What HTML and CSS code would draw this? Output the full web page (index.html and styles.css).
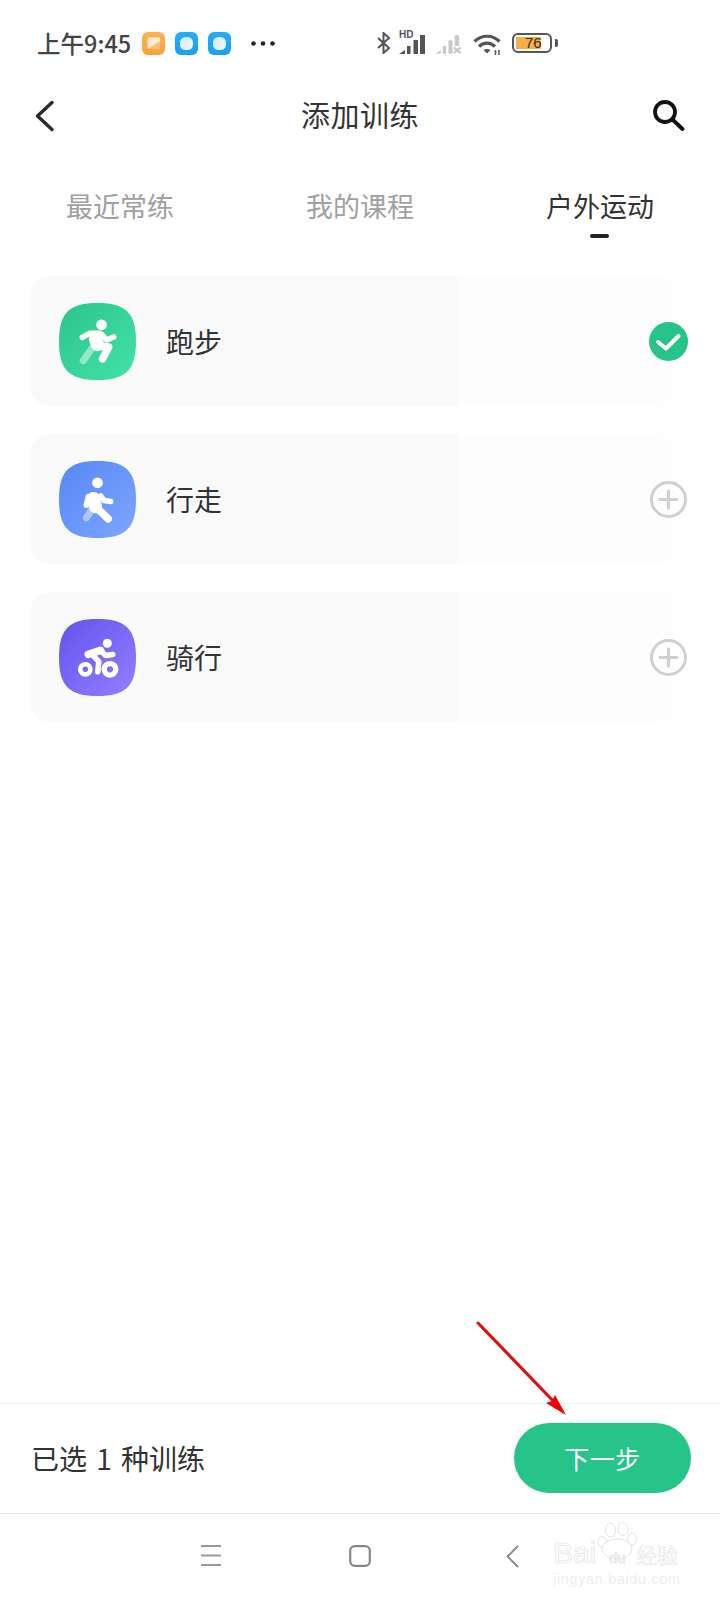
FILE: index.html
```html
<!DOCTYPE html>
<html lang="zh-CN">
<head>
<meta charset="utf-8">
<title>添加训练</title>
<link rel="stylesheet" href="styles.css">
</head>
<body>
<div class="app">
  <svg width="0" height="0" class="defs">
    <defs>
      <linearGradient id="gGreen" x1="0" y1="0" x2="1" y2="1"><stop offset="0" stop-color="#2cc38d"/><stop offset="1" stop-color="#43e3a9"/></linearGradient>
      <linearGradient id="gBlue" x1="0" y1="0" x2="1" y2="1"><stop offset="0" stop-color="#5587f5"/><stop offset="1" stop-color="#7fa6ff"/></linearGradient>
      <linearGradient id="gPurple" x1="0" y1="0" x2="1" y2="1"><stop offset="0" stop-color="#6253ec"/><stop offset="1" stop-color="#957fff"/></linearGradient>
      <linearGradient id="gOrange" x1="0" y1="0" x2="0" y2="1"><stop offset="0" stop-color="#fbb355"/><stop offset="1" stop-color="#f7a33a"/></linearGradient>
      <linearGradient id="gSky" x1="0" y1="0" x2="0" y2="1"><stop offset="0" stop-color="#25aef3"/><stop offset="1" stop-color="#1b9ff0"/></linearGradient>
      <linearGradient id="gDisc" x1="0" y1="0" x2="1" y2="1"><stop offset="0" stop-color="#cfe8fa"/><stop offset="1" stop-color="#f6f8f9"/></linearGradient>
    </defs>
  </svg>

  <header class="status">
    <div class="status-left">
      <span class="clock">上午9:45</span>
      <svg class="note" viewBox="0 0 23 23"><rect width="23" height="23" rx="6" fill="url(#gOrange)"/><rect x="5.500" y="5.500" width="12.500" height="11.500" rx="1.500" fill="#ffedd4"/><path d="M5.500 17L18 9v8z" fill="#fbc27a"/></svg>
      <svg class="note" viewBox="0 0 23 23"><rect width="23" height="23" rx="6" fill="url(#gSky)"/><rect x="5" y="5" width="13" height="13" rx="5.500" fill="url(#gDisc)"/></svg>
      <svg class="note" viewBox="0 0 23 23"><rect width="23" height="23" rx="6" fill="url(#gSky)"/><rect x="5" y="5" width="13" height="13" rx="5.500" fill="url(#gDisc)"/></svg>
      <svg class="dots" viewBox="0 0 24 5"><circle cx="2.500" cy="2.500" r="2.300" fill="#222"/><circle cx="12" cy="2.500" r="2.300" fill="#222"/><circle cx="21.500" cy="2.500" r="2.300" fill="#222"/></svg>
    </div>
    <div class="status-right">
      <svg class="ic-bt" viewBox="0 0 15 22"><path d="M2 6l11 10-5.500 5V1L13 6 2 16" fill="none" stroke="#555" stroke-width="2"/></svg>
      <div class="sig">
        <span class="hd">HD</span>
        <svg class="ic-sig" viewBox="0 0 27 19"><path d="M0 19l6-4v4zM8 11h3.500v8H8zM14.500 5H19v14h-4.500zM21 0h5v19h-5z" fill="#555"/></svg>
      </div>
      <svg class="ic-sig2" viewBox="0 0 27 19"><path d="M0 19l5-4v4zM7 11h3.500v8H7zM13 5h4v14h-4zM19.500 0H24v11h-4.500z" fill="#c8c8c8"/><path d="M18.500 12.500l7 6M25.500 12.500l-7 6" stroke="#c8c8c8" stroke-width="2.200"/></svg>
      <svg class="ic-wifi" viewBox="0 0 28 21"><path d="M1.500 7.500C8.500 .5 19.500 .5 26.500 7.500M6 12.500c4.500-4.500 11.500-4.500 16 0" fill="none" stroke="#555" stroke-width="3.200"/><path d="M10.500 16c2-1.500 5-1.500 7 0L14 19.500z" fill="#555"/><path d="M22.500 16v5M26 16v5" stroke="#555" stroke-width="1.500"/></svg>
      <div class="battery">
        <div class="cell"><span class="level"></span><span class="pct">76</span></div>
        <span class="tip"></span>
      </div>
    </div>
  </header>

  <nav class="titlebar">
    <svg class="ic-back" viewBox="0 0 20 32"><path d="M17 2.500L2.500 16 17 29.500" fill="none" stroke="#2b2b2b" stroke-width="3.400" stroke-linecap="round" stroke-linejoin="round"/></svg>
    <h1 class="title">添加训练</h1>
    <svg class="ic-search" viewBox="0 0 32 32"><circle cx="12" cy="12" r="10" fill="none" stroke="#111" stroke-width="3.800"/><path d="M20 20l9.500 9" stroke="#111" stroke-width="3.800" stroke-linecap="round"/></svg>
  </nav>

  <div class="tabs">
    <div class="tab">最近常练</div>
    <div class="tab">我的课程</div>
    <div class="tab active">户外运动</div>
  </div>

  <main class="list">
    <section class="card">
      <svg class="sport" viewBox="0 0 76 76">
        <path d="M38 0C66 0 76 10 76 38C76 66 66 76 38 76C10 76 0 66 0 38C0 10 10 0 38 0Z" fill="url(#gGreen)"/>
        <path d="M33 44L24 57" class="limb faded"/>
        <circle cx="42" cy="21.500" r="5.300" fill="#fff"/>
        <path d="M23 34L30 30H40" class="limb thin"/>
        <path d="M42 31L47 36.500L54 33.500" class="limb thin"/>
        <path d="M36 35.500L38 41" class="limb wide"/>
        <path d="M38 42.500L49 43.500L43 55" class="limb"/>
      </svg>
      <span class="name">跑步</span>
      <svg class="state" viewBox="0 0 39 39"><circle cx="19.500" cy="19.500" r="19.500" fill="#27c48a"/><path d="M9 20l8 6.500L29.500 14" fill="none" stroke="#fff" stroke-width="4" stroke-linecap="round" stroke-linejoin="round"/></svg>
    </section>

    <section class="card">
      <svg class="sport" viewBox="0 0 76 76">
        <path d="M38 0C66 0 76 10 76 38C76 66 66 76 38 76C10 76 0 66 0 38C0 10 10 0 38 0Z" fill="url(#gBlue)"/>
        <path d="M33 47L27 56" class="limb faded"/>
        <circle cx="38" cy="21.500" r="5.300" fill="#fff"/>
        <path d="M29 35L27 43.500" class="limb thin"/>
        <path d="M41 34.500L44.500 39L51 40" class="limb thin"/>
        <path d="M34 37L36 45" class="limb wide"/>
        <path d="M37 46L48.500 57" class="limb"/>
      </svg>
      <span class="name">行走</span>
      <svg class="state" viewBox="0 0 39 39"><circle cx="19.500" cy="19.500" r="17" fill="none" stroke="#d0d0d0" stroke-width="3"/><path d="M19.500 11v17M11 19.500h17" stroke="#d0d0d0" stroke-width="3" stroke-linecap="round"/></svg>
    </section>

    <section class="card">
      <svg class="sport" viewBox="0 0 76 76">
        <path d="M38 0C66 0 76 10 76 38C76 66 66 76 38 76C10 76 0 66 0 38C0 10 10 0 38 0Z" fill="url(#gPurple)"/>
        <circle cx="47.700" cy="24" r="4.500" fill="#fff"/>
        <circle cx="26" cy="49.700" r="5" fill="none" stroke="#fff" stroke-width="4.600"/>
        <circle cx="50.300" cy="49.700" r="5.700" fill="none" stroke="#fff" stroke-width="5.300"/>
        <path d="M29 35L41 31" class="limb"/>
        <path d="M41 31L46 36L53 35" class="limb thin"/>
        <path d="M32.700 35L39.300 42L38.300 52" class="limb thin"/>
      </svg>
      <span class="name">骑行</span>
      <svg class="state" viewBox="0 0 39 39"><circle cx="19.500" cy="19.500" r="17" fill="none" stroke="#d0d0d0" stroke-width="3"/><path d="M19.500 11v17M11 19.500h17" stroke="#d0d0d0" stroke-width="3" stroke-linecap="round"/></svg>
    </section>
  </main>

  <footer class="actionbar">
    <span class="summary">已选 1 种训练</span>
    <button class="next">下一步</button>
  </footer>

  <div class="navbar">
    <svg class="nav-menu" viewBox="0 0 20 21"><path d="M0 1h20M0 10.500h20M0 20h20" stroke="#999" stroke-width="1.800"/></svg>
    <svg class="nav-home" viewBox="0 0 22 22"><rect x="1.200" y="1.200" width="19.600" height="19.600" rx="4.500" fill="none" stroke="#888" stroke-width="2.200"/></svg>
    <svg class="nav-back" viewBox="0 0 13 23"><path d="M12 1L1.500 11.500 12 22" fill="none" stroke="#888" stroke-width="1.800"/></svg>
  </div>

  <div class="watermark">
    <svg class="paw" viewBox="0 0 40 38"><g fill="#fff" stroke="#e4e4e4" stroke-width="1"><ellipse cx="5" cy="20" rx="4.200" ry="5.500"/><ellipse cx="13.500" cy="8" rx="5" ry="7"/><ellipse cx="26" cy="7" rx="5" ry="6.500"/><ellipse cx="35" cy="17" rx="4.500" ry="6"/><ellipse cx="20" cy="27" rx="15" ry="10"/></g></svg>
    <div class="wm-logo"><span class="wm-bai">Bai</span><span class="wm-du">du</span><span class="wm-cn">经验</span></div>
    <div class="wm-url">jingyan.baidu.com</div>
  </div>

  <svg class="arrow" viewBox="0 0 110 110">
    <path d="M10 9L90 92" stroke="#7a4040" stroke-opacity=".4" stroke-width="3.200" transform="translate(1.500 1.500)"/>
    <path d="M8 7L88 90" stroke="#e30d0d" stroke-width="3" stroke-linecap="round"/>
    <path d="M96 99L76 87L82 85L85 79Z" fill="#f00000"/>
  </svg>
</div>
</body>
</html>
```

FILE: styles.css
```css
* { box-sizing: border-box; }
html, body { margin: 0; padding: 0; background: #fff; }
body { font-family: "Noto Sans CJK SC", "Noto Sans", sans-serif; color: #333; }
.defs { position: absolute; }
.app { position: relative; width: 720px; height: 1600px; display: flex; flex-direction: column; overflow: hidden; background: #fff; }

.status { height: 86px; flex: none; display: flex; align-items: center; padding: 0 162px 0 37px; justify-content: space-between; }
.status-left { display: flex; align-items: center; }
.clock { font-size: 23.500px; font-weight: 500; color: #444; width: 105px; line-height: 30px; white-space: nowrap; }
.note { width: 23px; height: 23px; margin-right: 10px; }
.dots { width: 24px; height: 5px; margin-left: 10px; }
.status-right { display: flex; align-items: center; height: 26px; }
.ic-bt { width: 15px; height: 22px; margin-right: 8px; }
.sig { position: relative; width: 27px; height: 21px; margin-right: 10px; }
.hd { position: absolute; left: 0; top: -3px; font: 700 10px/10px "Liberation Sans", sans-serif; color: #555; }
.ic-sig { width: 27px; height: 19px; display: block; margin-top: 2px; }
.ic-sig2 { width: 26px; height: 19px; margin-right: 11px; margin-top: 2px; }
.ic-wifi { width: 28px; height: 21px; margin-right: 11px; margin-top: 2px; }
.battery { display: flex; align-items: center; }
.cell { position: relative; width: 40px; height: 20px; border: 2.500px solid #555; border-radius: 6px; }
.level { position: absolute; left: 2px; top: 2px; bottom: 2px; width: 25px; background: #f6ae4b; }
.pct { position: absolute; left: 11px; top: -2px; font: 15px/20px "Liberation Sans", sans-serif; color: #3a2a10; }
.tip { width: 3px; height: 8px; margin-left: 3px; background: #555; border-radius: 0 2px 2px 0; }

.titlebar { height: 60px; flex: none; display: grid; grid-template-columns: 1fr auto 1fr; align-items: center; padding: 0 35px; }
.ic-back { width: 20px; height: 32px; }
.ic-search { width: 32px; height: 32px; justify-self: end; }
.title { margin: 0 0 4px; font-size: 29px; font-weight: 400; line-height: 40px; letter-spacing: .5px; color: #333; }

.tabs { flex: none; display: grid; grid-template-columns: repeat(3, 240px); padding-top: 40px; }
.tab { position: relative; text-align: center; font-size: 27px; line-height: 40px; color: #a0a0a0; height: 52px; }
.tab.active { color: #333; }
.tab.active::after { content: ""; position: absolute; left: 110px; top: 48px; width: 19px; height: 4px; border-radius: 2px; background: #222; }

.list { flex: 1; display: flex; flex-direction: column; gap: 28px; padding: 38px 30px 0; }
.card { height: 130px; display: flex; align-items: center; padding-left: 29px; padding-right: 2px; border-radius: 20px; background: linear-gradient(90deg, #fafafa 0, #fafafa 428px, #fdfdfd 428px, #fdfdfd 625px, #fff 660px); }
.sport { width: 77px; height: 77px; flex: none; }
.limb { fill: none; stroke: #fff; stroke-width: 7.500; stroke-linecap: round; stroke-linejoin: round; }
.limb.thin { stroke-width: 5.500; }
.limb.wide { stroke-width: 13; }
.limb.faded { stroke-opacity: .45; stroke-width: 7; }
.name { margin-left: 30px; font-size: 28px; line-height: 40px; color: #333; flex: 1; }
.state { width: 39px; height: 39px; flex: none; }

.actionbar { height: 111px; flex: none; display: flex; align-items: center; justify-content: space-between; padding: 0 29px 2px 31px; border-top: 1px solid #eee; border-bottom: 1px solid #e8e8e8; }
.summary { font-size: 28px; line-height: 40px; word-spacing: 3px; color: #333; }
.next { width: 177px; height: 70px; border: 0; border-radius: 35px; background: #27c48a; color: #fff; font: 25px/34px "Noto Sans CJK SC", sans-serif; letter-spacing: .5px; padding: 0; }

.navbar { height: 86px; flex: none; display: flex; align-items: flex-start; padding: 31px 0 0 201px; }
.nav-menu { width: 20px; height: 21px; margin-right: 128px; }
.nav-home { width: 22px; height: 22px; margin-right: 135px; }
.nav-back { width: 13px; height: 23px; }

.watermark { position: absolute; left: 553px; top: 1522px; width: 130px; height: 66px; }
.paw { position: absolute; left: 44px; top: 0; width: 40px; height: 38px; }
.wm-logo { position: absolute; left: 0; top: 16px; white-space: nowrap; display: flex; align-items: baseline; }
.wm-bai, .wm-du, .wm-cn { color: transparent; -webkit-text-stroke: .7px #e2e2e2; font-family: "Liberation Sans", sans-serif; }
.wm-bai { font-size: 30px; line-height: 30px; width: 48px; }
.wm-du { font-size: 15px; line-height: 30px; width: 35px; padding-left: 8px; }
.wm-cn { font-family: "Noto Sans CJK SC", sans-serif; font-size: 21px; line-height: 30px; -webkit-text-stroke: .5px #e2e2e2; }
.wm-url { position: absolute; left: 0; top: 48px; font: 15px/18px "Liberation Sans", sans-serif; letter-spacing: .4px; color: #eee; white-space: nowrap; }

.arrow { position: absolute; left: 470px; top: 1316px; width: 110px; height: 110px; }
```
